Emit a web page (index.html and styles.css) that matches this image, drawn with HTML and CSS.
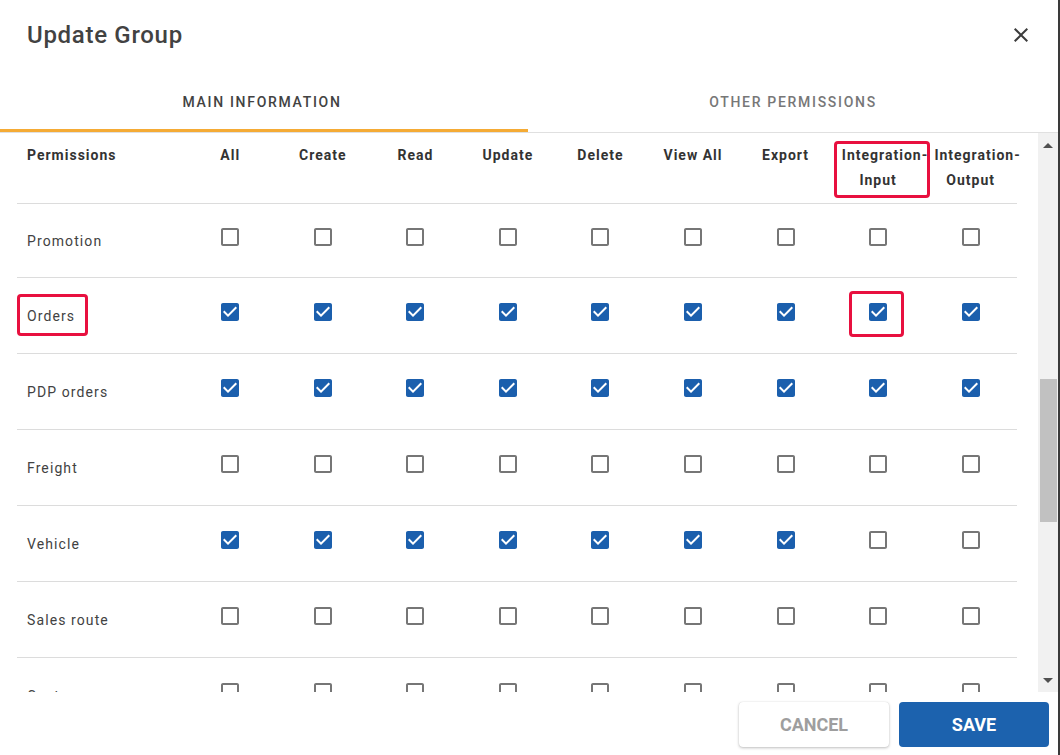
FILE: index.html
```html
<!DOCTYPE html>
<html>
<head>
<meta charset="utf-8">
<link rel="stylesheet" href="styles.css">
</head>
<body>
<div class="dialog">
  <div class="dlg-header">
    <h1 class="title">Update Group</h1>
    <button class="close" aria-label="close">
      <svg width="24" height="24" viewBox="0 0 24 24"><path d="M19 6.41 17.59 5 12 10.59 6.41 5 5 6.41 10.59 12 5 17.59 6.41 19 12 13.41 17.59 19 19 17.59 13.41 12z" fill="#3c3c3c"/></svg>
    </button>
  </div>
  <div class="tabs">
    <div class="tab active">MAIN INFORMATION</div>
    <div class="tab">OTHER PERMISSIONS</div>
  </div>
  <div class="dlg-body">
    <div class="scroll">
      <table class="perm">
        <colgroup>
          <col class="c-name">
          <col><col><col><col><col><col><col><col><col>
        </colgroup>
        <thead>
          <tr>
            <th class="name">Permissions</th>
            <th>All</th>
            <th>Create</th>
            <th>Read</th>
            <th>Update</th>
            <th>Delete</th>
            <th>View All</th>
            <th>Export</th>
            <th class="hl-cell">Integration-Input<span class="mark mark-head"></span></th>
            <th>Integration-Output</th>
          </tr>
        </thead>
        <tbody id="rows"></tbody>
      </table>
    </div>
    <div class="vscroll">
      <div class="arrow up"></div>
      <div class="track"><div class="thumb"></div></div>
      <div class="arrow down"></div>
    </div>
  </div>
  <div class="dlg-footer">
    <button class="btn cancel">CANCEL</button>
    <button class="btn save">SAVE</button>
  </div>
</div>
<div class="edge"></div>
<script src="app.js"></script>
</body>
</html>
```

FILE: app.js
```js
var data = [
  ["Promotion", [0,0,0,0,0,0,0,0,0]],
  ["Orders", [1,1,1,1,1,1,1,1,1]],
  ["PDP orders", [1,1,1,1,1,1,1,1,1]],
  ["Freight", [0,0,0,0,0,0,0,0,0]],
  ["Vehicle", [1,1,1,1,1,1,1,0,0]],
  ["Sales route", [0,0,0,0,0,0,0,0,0]],
  ["Customer", [0,0,0,0,0,0,0,0,0]]
];
var ON = '<svg class="cb on" width="24" height="24" viewBox="0 0 24 24"><rect x="5" y="5" width="14" height="14" fill="#fff"/><path d="M19 3H5c-1.11 0-2 .9-2 2v14c0 1.1.89 2 2 2h14c1.11 0 2-.9 2-2V5c0-1.1-.89-2-2-2zm-9 14l-5-5 1.41-1.41L10 14.17l7.59-7.59L19 8l-9 9z"/></svg>';
var OFF = '<svg class="cb off" width="24" height="24" viewBox="0 0 24 24"><path d="M19 5v14H5V5h14m0-2H5c-1.1 0-2 .9-2 2v14c0 1.1.9 2 2 2h14c1.1 0 2-.9 2-2V5c0-1.1-.9-2-2-2z"/></svg>';
var html = "";
data.forEach(function (r) {
  html += "<tr>";
  if (r[0] === "Orders") {
    html += '<td class="name hl-cell">' + r[0] + '<span class="mark mark-name"></span></td>';
  } else {
    html += '<td class="name">' + r[0] + "</td>";
  }
  r[1].forEach(function (v, ci) {
    if (r[0] === "Orders" && ci === 7) {
      html += '<td class="hl-cell">' + (v ? ON : OFF) + '<span class="mark mark-cb"></span></td>';
    } else {
      html += "<td>" + (v ? ON : OFF) + "</td>";
    }
  });
  html += "</tr>";
});
document.getElementById("rows").innerHTML = html;
```

FILE: styles.css
```css
* { box-sizing: border-box; }
html, body { margin: 0; padding: 0; }
body {
  width: 1060px;
  height: 755px;
  overflow: hidden;
  display: flex;
  font-family: Roboto, "Liberation Sans", Arial, sans-serif;
  color: #424242;
  background: #fff;
}
.dialog {
  width: 1058px;
  height: 755px;
  display: flex;
  flex-direction: column;
  background: #fff;
}
.edge { width: 2px; background: #3a3a3a; }

.dlg-header {
  height: 70px;
  display: flex;
  align-items: center;
  justify-content: space-between;
  padding: 0 25px 0 27px;
}
.title {
  margin: 0;
  font-size: 24px;
  font-weight: 500;
  letter-spacing: 0.7px;
  color: #424242;
}
.close {
  border: 0;
  background: transparent;
  padding: 0;
  width: 24px;
  height: 24px;
  display: flex;
}

.tabs {
  height: 63px;
  display: grid;
  grid-template-columns: 528px 1fr;
  border-bottom: 1px solid #e0e0e0;
}
.tab {
  display: flex;
  align-items: center;
  justify-content: center;
  padding: 5px 0 0 0;
  font-size: 14px;
  font-weight: 500;
  letter-spacing: 1.7px;
  color: #777;
  border-bottom: 3px solid transparent;
}
.tab.active {
  color: #424242;
  border-bottom-color: #f5ab35;
  padding-right: 4px;
}

.dlg-body {
  height: 559px;
  display: flex;
}
.scroll {
  flex: 1;
  overflow: hidden;
  padding-left: 17px;
}
.perm {
  width: 1000px;
  table-layout: fixed;
  border-collapse: collapse;
  font-size: 14px;
  letter-spacing: 1.1px;
}
.c-name { width: 167px; }
.perm th {
  height: 70px;
  padding: 10px;
  vertical-align: top;
  text-align: center;
  font-weight: 700;
  line-height: 25px;
  letter-spacing: 1px;
  color: #333;
  border-bottom: 1px solid #dcdcdc;
}
.perm th.name, .perm td.name {
  text-align: left;
  padding-left: 10px;
}
.perm td {
  height: 76px;
  text-align: center;
  vertical-align: middle;
  border-bottom: 1px solid #dcdcdc;
  color: #424242;
  padding: 0;
}
.perm tbody tr:first-child td { height: 74px; }
.perm td .cb { display: block; margin: -8px auto 0; }
.cb.on { fill: #1b5fad; }
.cb.off { fill: #767676; }

.hl-cell { position: relative; }
.mark {
  position: absolute;
  border: 3px solid #e8103f;
  border-radius: 4px;
  pointer-events: none;
}
.mark-head { left: 2px; top: 8px; width: 96px; height: 57px; }
.mark-name { left: 0; top: 16px; width: 71px; height: 42px; }
.mark-cb { left: 17px; top: 13px; width: 55px; height: 46px; }

.vscroll {
  width: 20px;
  background: #f1f1f1;
  display: flex;
  flex-direction: column;
}
.arrow {
  height: 24px;
  display: flex;
  align-items: center;
  justify-content: center;
}
.arrow::before {
  content: "";
  width: 0;
  height: 0;
  border-left: 5px solid transparent;
  border-right: 5px solid transparent;
}
.arrow.up::before { border-bottom: 5px solid #505050; }
.arrow.down::before { border-top: 5px solid #505050; }
.track { flex: 1; padding-top: 222px; padding-left: 2px; }
.thumb { width: 17px; height: 143px; background: #c1c1c1; }

.dlg-footer {
  height: 63px;
  display: flex;
  justify-content: flex-end;
  gap: 10px;
  padding: 10px 9px 0 0;
}
.btn {
  width: 150px;
  height: 45px;
  border-radius: 4px;
  border: 0;
  font-family: Roboto, "Liberation Sans", Arial, sans-serif;
  font-size: 18px;
  font-weight: 700;
}
.cancel {
  background: #fff;
  color: #9e9e9e;
  box-shadow: 0 1px 3px rgba(0,0,0,0.25), 0 0 1px rgba(0,0,0,0.15);
}
.save {
  background: #1c62ae;
  color: #fff;
}
```
